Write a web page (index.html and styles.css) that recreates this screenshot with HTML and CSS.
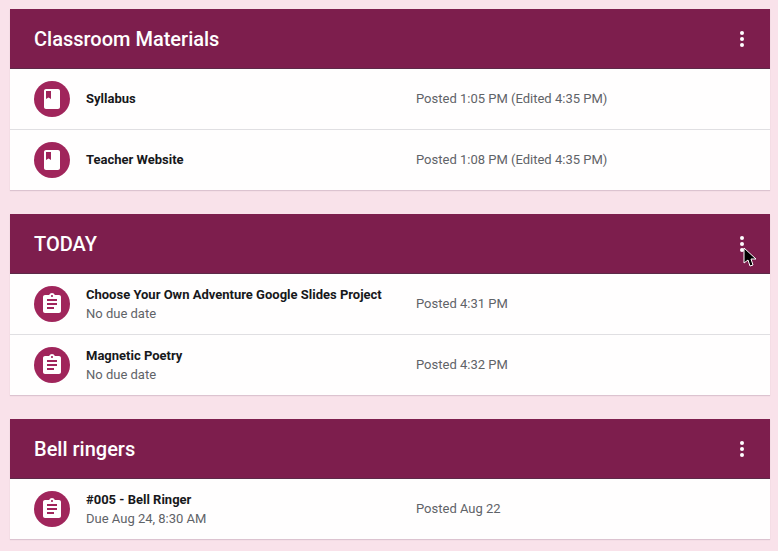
FILE: index.html
```html
<!DOCTYPE html>
<html lang="en">
<head>
    <meta charset="UTF-8">
    <meta name="viewport" content="width=device-width, initial-scale=1.0">
    <title>Classwork</title>
    <link rel="stylesheet" href="styles.css">
</head>
<body>

    <!-- shared icons -->
    <svg class="icon-defs" aria-hidden="true">
        <symbol id="icon-more" viewBox="0 0 24 24">
            <circle cx="12" cy="6" r="2"/>
            <circle cx="12" cy="12" r="2"/>
            <circle cx="12" cy="18" r="2"/>
        </symbol>
        <symbol id="icon-book" viewBox="0 0 24 24">
            <path d="M18 2H6c-1.1 0-2 .9-2 2v16c0 1.1.9 2 2 2h12c1.1 0 2-.9 2-2V4c0-1.1-.9-2-2-2zM6 4h5v8l-2.5-1.5L6 12V4z"/>
        </symbol>
        <symbol id="icon-assignment" viewBox="0 0 24 24">
            <path d="M19 3h-4.18C14.4 1.84 13.3 1 12 1c-1.3 0-2.4.84-2.82 2H5c-1.1 0-2 .9-2 2v14c0 1.1.9 2 2 2h14c1.1 0 2-.9 2-2V5c0-1.1-.9-2-2-2zm-7 0c.55 0 1 .45 1 1s-.45 1-1 1-1-.45-1-1 .45-1 1-1zm2 14H7v-2h7v2zm3-4H7v-2h10v2zm0-4H7V7h10v2z"/>
        </symbol>
    </svg>

    <main class="topics">
        <section class="topic">
            <header class="topic-header">
                <h2>Classroom Materials</h2>
                <button class="more-button" type="button" aria-label="Options for Classroom Materials">
                    <svg><use href="#icon-more"/></svg>
                </button>
            </header>
            <ul class="post-list">
                <li class="post">
                    <span class="post-icon"><svg><use href="#icon-book"/></svg></span>
                    <div class="post-info">
                        <h3>Syllabus</h3>
                    </div>
                    <p class="post-date">Posted 1:05 PM (Edited 4:35 PM)</p>
                </li>
                <li class="post">
                    <span class="post-icon"><svg><use href="#icon-book"/></svg></span>
                    <div class="post-info">
                        <h3>Teacher Website</h3>
                    </div>
                    <p class="post-date">Posted 1:08 PM (Edited 4:35 PM)</p>
                </li>
            </ul>
        </section>

        <section class="topic">
            <header class="topic-header">
                <h2>TODAY</h2>
                <button class="more-button" type="button" aria-label="Options for TODAY">
                    <svg><use href="#icon-more"/></svg>
                    <svg class="pointer" viewBox="0 0 14 20" aria-hidden="true">
                        <path d="M1 1v15l4-3 2 6 3-1-2-6h5z"/>
                    </svg>
                </button>
            </header>
            <ul class="post-list">
                <li class="post">
                    <span class="post-icon"><svg><use href="#icon-assignment"/></svg></span>
                    <div class="post-info">
                        <h3>Choose Your Own Adventure Google Slides Project</h3>
                        <p>No due date</p>
                    </div>
                    <p class="post-date">Posted 4:31 PM</p>
                </li>
                <li class="post">
                    <span class="post-icon"><svg><use href="#icon-assignment"/></svg></span>
                    <div class="post-info">
                        <h3>Magnetic Poetry</h3>
                        <p>No due date</p>
                    </div>
                    <p class="post-date">Posted 4:32 PM</p>
                </li>
            </ul>
        </section>

        <section class="topic">
            <header class="topic-header">
                <h2>Bell ringers</h2>
                <button class="more-button" type="button" aria-label="Options for Bell ringers">
                    <svg><use href="#icon-more"/></svg>
                </button>
            </header>
            <ul class="post-list">
                <li class="post">
                    <span class="post-icon"><svg><use href="#icon-assignment"/></svg></span>
                    <div class="post-info">
                        <h3>#005 - Bell Ringer</h3>
                        <p>Due Aug 24, 8:30 AM</p>
                    </div>
                    <p class="post-date">Posted Aug 22</p>
                </li>
            </ul>
        </section>
    </main>

</body>
</html>
```

FILE: styles.css
```css
* {
    box-sizing: border-box;
}
body {
    margin: 0;
    font-family: Roboto, Arial, sans-serif;
    font-size: 13px;
    line-height: 18px;
    background-color: #f9e2ea;
    color: #5f6368;
}
h2, h3, p, ul {
    margin: 0;
    padding: 0;
}
.icon-defs {
    display: none;
}
.topics {
    display: flex;
    flex-direction: column;
    gap: 24px;
    padding: 9px 8px 12px 10px;
}
.topic {
    background-color: #fffefe;
    box-shadow: 0 1px 1px #dcc3d0;
}
.topic-header {
    display: flex;
    align-items: center;
    justify-content: space-between;
    min-height: 60px;
    padding: 0 16px 0 24px;
    background-color: #7d1e4d;
    color: #fff;
    box-shadow: inset 0 -1px #5c2a48;
}
.topic-header h2 {
    font-size: 20px;
    line-height: 28px;
    font-weight: 500;
}
.more-button {
    position: relative;
    width: 24px;
    height: 24px;
    padding: 0;
    border: none;
    background: none;
    color: #fff;
    cursor: pointer;
}
.more-button svg {
    display: block;
    width: 24px;
    height: 24px;
    fill: currentColor;
}
/* mouse pointer over the menu button */
.more-button .pointer {
    position: absolute;
    top: 15px;
    left: 13px;
    width: 14px;
    height: 20px;
    fill: #000;
    stroke: #fff;
    stroke-width: 1;
}
.post-list {
    list-style: none;
}
.post {
    display: grid;
    grid-template-columns: 36px 1fr 1fr;
    align-items: center;
    min-height: 60px;
    padding: 0 24px;
}
.post + .post {
    min-height: 61px;
    border-top: 1px solid #e0dfe2;
}
.post-icon {
    display: flex;
    align-items: center;
    justify-content: center;
    width: 36px;
    height: 36px;
    border-radius: 50%;
    background-color: #a0255b;
}
.post-icon svg {
    width: 24px;
    height: 24px;
    fill: #fff;
}
.post-info {
    padding-left: 16px;
}
.post-info h3 {
    font-size: 13px;
    line-height: 20px;
    font-weight: 700;
    color: #17181b;
}
.post-date {
    padding-left: 8px;
    line-height: 20px;
}
```
